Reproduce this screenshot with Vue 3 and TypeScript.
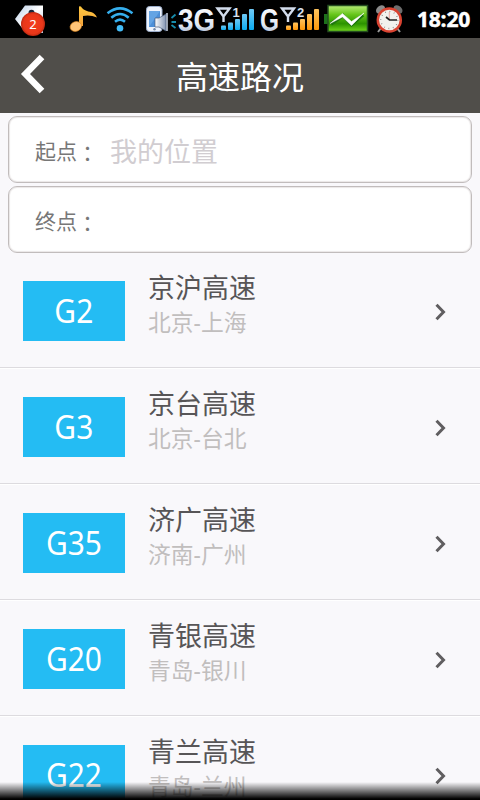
<script setup lang="ts">
interface Road {
  code: string
  name: string
  route: string
}

const roads: Road[] = [
  { code: 'G2', name: '京沪高速', route: '北京-上海' },
  { code: 'G3', name: '京台高速', route: '北京-台北' },
  { code: 'G35', name: '济广高速', route: '济南-广州' },
  { code: 'G20', name: '青银高速', route: '青岛-银川' },
  { code: 'G22', name: '青兰高速', route: '青岛-兰州' },
]
</script>

<template>
  <div class="screen">
    <div class="status">
      <svg width="60" height="38" viewBox="0 0 60 38">
        <defs>
          <linearGradient id="tag" x1="0" y1="0" x2="1" y2="1">
            <stop offset="0" stop-color="#b7cde6" /><stop offset="0.5" stop-color="#fff" /><stop offset="1" stop-color="#b5c8df" />
          </linearGradient>
          <radialGradient id="red"><stop offset="0" stop-color="#f43c1c" /><stop offset="0.8" stop-color="#e9371a" /><stop offset="1" stop-color="#bd2811" /></radialGradient>
        </defs>
        <path d="M15 19L25 5.500H43V33H26Z" fill="url(#tag)" />
        <circle cx="31.500" cy="12.800" r="3" fill="#18283c" />
        <circle cx="33" cy="24" r="12" fill="url(#red)" />
        <text x="33" y="28.800" text-anchor="middle" class="count">2</text>
      </svg>
      <svg width="42" height="38" viewBox="60 0 42 38">
        <defs>
          <linearGradient id="note" x1="0" y1="0" x2="0" y2="1"><stop offset="0" stop-color="#ffc83f" /><stop offset="1" stop-color="#f4a33c" /></linearGradient>
        </defs>
        <path d="M79 6.500Q81 5.500 82 8Q85 11 91 12Q95 13 97 17.500Q90 14.500 83 16V26H79Z" fill="url(#note)" />
        <ellipse cx="75.800" cy="26.500" rx="5.800" ry="4.800" transform="rotate(-20 75.800 26.500)" fill="#ffc477" stroke="#e58b20" stroke-width=".6" />
      </svg>
      <svg width="40" height="38" viewBox="102 0 40 38">
        <g fill="none" stroke="#35aeed" stroke-width="2.500">
          <path d="M107.500 13.200Q120 3.500 132.500 13.200" />
          <path d="M111.300 17.800Q120 10.300 128.700 17.800" />
          <path d="M115 21.800Q120 17.500 125 21.800" />
        </g>
        <circle cx="120" cy="28.300" r="3.300" fill="#43bdf8" />
      </svg>
      <svg width="36" height="38" viewBox="142 0 36 38">
        <defs>
          <linearGradient id="silver" x1="0" y1="0" x2="1" y2="0"><stop offset="0" stop-color="#fff" /><stop offset="1" stop-color="#8193b1" /></linearGradient>
        </defs>
        <rect x="146.500" y="6.500" width="15.500" height="25" rx="3" fill="#eef3fc" stroke="#9badca" />
        <rect x="149" y="11" width="11" height="16" fill="#4d8fd8" />
        <path d="M149 27L160 11H149Z" fill="#75b2ed" opacity=".6" />
        <circle cx="154.500" cy="29.300" r="1.200" fill="#7589a8" />
        <path d="M155 18H159L166 14V31L159 27H155Z" fill="url(#silver)" stroke="#485a79" stroke-width=".7" />
        <path d="M167 13V31" stroke="#ccd7e8" stroke-width="1.500" />
        <path d="M171.500 18L175.500 14.500M171.500 22H176M171.500 25L175.500 28" stroke="#168cad" stroke-width="1.800" />
      </svg>
      <svg width="80" height="38" viewBox="178 0 80 38">
        <defs>
          <linearGradient id="metal" x1="0" y1="0" x2="0" y2="1"><stop offset="0" stop-color="#fff" /><stop offset="0.65" stop-color="#e2e9f3" /><stop offset="1" stop-color="#91a5c4" /></linearGradient>
          <linearGradient id="blue" x1="0" y1="0" x2="0" y2="1"><stop offset="0" stop-color="#70c9f5" /><stop offset="1" stop-color="#0cacf1" /></linearGradient>
        </defs>
        <text x="178" y="30.500" class="network" textLength="37" lengthAdjust="spacingAndGlyphs" fill="url(#metal)">3G</text>
        <path d="M217.500 8.500H229.500L223.500 16.500ZM223.500 16V22" class="antenna" />
        <text x="232.500" y="16.500" class="sim">1</text>
        <g fill="url(#blue)">
          <rect x="221" y="25.500" width="5" height="4.500" rx="1" /><rect x="228" y="22.500" width="5" height="7.500" rx="1" /><rect x="235" y="19" width="5" height="11" rx="1" /><rect x="242" y="14" width="5" height="16" rx="1" /><rect x="249" y="9" width="5" height="21" rx="1" />
        </g>
      </svg>
      <svg width="65" height="38" viewBox="258 0 65 38">
        <defs>
          <linearGradient id="orange" x1="0" y1="0" x2="0" y2="1"><stop offset="0" stop-color="#ffc45e" /><stop offset="1" stop-color="#ff980a" /></linearGradient>
        </defs>
        <text x="260" y="30.500" class="network" textLength="19" lengthAdjust="spacingAndGlyphs" fill="url(#metal)">G</text>
        <path d="M282 8.500H294L288 16.500ZM288 16V22" class="antenna" />
        <text x="297" y="16.500" class="sim">2</text>
        <g fill="url(#orange)">
          <rect x="286" y="25.500" width="5" height="4.500" rx="1" /><rect x="293" y="22.500" width="5" height="7.500" rx="1" /><rect x="300" y="19" width="5" height="11" rx="1" /><rect x="307" y="14" width="5" height="16" rx="1" /><rect x="314" y="9" width="5" height="21" rx="1" />
        </g>
      </svg>
      <svg width="49" height="38" viewBox="323 0 49 38">
        <defs>
          <linearGradient id="green" x1="0" y1="0" x2="0" y2="1"><stop offset="0" stop-color="#b7ec76" /><stop offset="0.35" stop-color="#66c51b" /><stop offset="0.7" stop-color="#2c9300" /><stop offset="1" stop-color="#73d91c" /></linearGradient>
        </defs>
        <rect x="324" y="14" width="5" height="10" fill="#1d711b" />
        <rect x="328" y="5.500" width="39.500" height="26" fill="url(#green)" stroke="#254e20" stroke-width="1.500" />
        <path d="M331 24L343 15.500L351.500 24.500L363 15" fill="none" stroke="#1e7610" stroke-width="3.500" />
        <path d="M330 23.500L342.500 13.500L351.500 21.500L364 13L351.500 25.500L342.500 17Z" fill="#fff" stroke="#fff" stroke-width=".5" />
      </svg>
      <svg width="34" height="38" viewBox="372 0 34 38">
        <path d="M381 28L378 32M397 28L400 32" stroke="#999" stroke-width="2" />
        <ellipse cx="380.500" cy="9.500" rx="5" ry="3.700" transform="rotate(-40 380.500 9.500)" fill="#8b8b8b" />
        <ellipse cx="398" cy="9.500" rx="5" ry="3.700" transform="rotate(40 398 9.500)" fill="#6c6c6c" />
        <circle cx="389.300" cy="20" r="11.500" fill="#f2f2ee" stroke="#d94331" stroke-width="2.500" />
        <circle cx="389.300" cy="20" r="8.500" fill="none" stroke="#777" stroke-width="1.300" stroke-dasharray=".7 3.751" />
        <path d="M389.300 20V12" stroke="#ecaaa4" />
        <path d="M386 17L389.500 20H397" fill="none" stroke="#222" stroke-width="1.700" />
      </svg>
      <span class="time">18:20</span>
    </div>

    <header class="header">
      <svg class="back" width="26" height="42" viewBox="0 0 26 42"><path d="M22 4L5.500 21L22 38" fill="none" stroke="#fff" stroke-width="6.500" /></svg>
      <h1>高速路况</h1>
    </header>

    <div class="form">
      <div class="field"><span class="label">起点<span class="colon">：</span></span><span class="placeholder">我的位置</span></div>
      <div class="field"><span class="label">终点<span class="colon">：</span></span></div>
    </div>

    <div class="list">
      <div v-for="road in roads" :key="road.code" class="row">
        <div class="badge"><span class="code">{{ road.code }}</span></div>
        <div class="info">
          <div class="name">{{ road.name }}</div>
          <div class="route">{{ road.route }}</div>
        </div>
        <svg class="chevron" width="12" height="20" viewBox="0 0 12 20"><path d="M2.500 2.800L9.500 10L2.500 17.200" fill="none" stroke="#605e60" stroke-width="3" /></svg>
      </div>
    </div>
    <div class="fade"></div>
  </div>
</template>

<style>
body {
  overflow: hidden;
}
</style>

<style scoped>
.screen {
  position: relative;
  width: 480px;
  height: 800px;
  overflow: hidden;
  background: #f9f8fb;
  font-family: "Noto Sans", "Noto Sans CJK SC", sans-serif;
}
.status {
  display: flex;
  height: 38px;
  background: #000;
}
.status svg {
  flex: none;
}
.count {
  font-size: 13px;
  fill: #fff;
}
.network {
  font: bold 32px "Liberation Sans", sans-serif;
}
.antenna {
  fill: none;
  stroke: #d2dcec;
  stroke-width: 2.4px;
}
.sim {
  font: bold 13px "Liberation Sans", sans-serif;
  fill: #d9e2ef;
}
.time {
  margin-left: 11px;
  font-family: "Open Sans", sans-serif;
  font-size: 21px;
  font-weight: 700;
  line-height: 39px;
  letter-spacing: -0.2px;
  color: #fff;
  -webkit-text-stroke: 0.5px #fff;
}
.header {
  display: flex;
  align-items: center;
  height: 75px;
  box-sizing: border-box;
  padding-left: 20px;
  background: #504e4a;
}
.back {
  flex: none;
  margin-bottom: 3px;
}
.header h1 {
  flex: 1;
  margin: 0;
  padding: 3px 46px 0 0;
  text-align: center;
  font-size: 32px;
  font-weight: 400;
  line-height: 40px;
  color: #fff;
}
.form {
  display: flex;
  flex-direction: column;
  gap: 3px;
  height: 139px;
  box-sizing: border-box;
  padding: 3px 8px 0;
}
.field {
  display: flex;
  flex: none;
  align-items: center;
  height: 67px;
  box-sizing: border-box;
  padding-left: 26px;
  border: 1px solid #c1bcbc;
  border-radius: 9px;
  background: #fff;
  box-shadow: inset 0 0 1px 1px #eae7e7;
}
.label {
  width: 75px;
  padding-top: 1px;
  font-size: 21px;
  line-height: 28px;
  color: #777;
}
.colon {
  display: inline-block;
  font-family: "Noto Sans CJK TC", sans-serif;
  transform: translateY(2px);
}
.placeholder {
  padding-top: 4px;
  font-size: 27px;
  line-height: 36px;
  color: #d1cdd1;
}
.row {
  display: flex;
  height: 116px;
  box-sizing: border-box;
  padding: 0 34px 0 23px;
  border-bottom: 1px solid #dddbdf;
  box-shadow: 0 1px #fff;
}
.badge {
  width: 102px;
  height: 60px;
  margin-top: 29px;
  background: #24bcf3;
  color: #fff;
  font-size: 32px;
  line-height: 60px;
  text-align: center;
}
.code {
  display: inline-block;
  transform: scaleX(0.935);
}
.info {
  flex: 1;
  padding: 18px 0 0 23px;
}
.name {
  font-size: 27px;
  line-height: 36px;
  color: #575557;
}
.route {
  font-size: 22.8px;
  line-height: 33px;
  color: #c1bebe;
}
.chevron {
  margin-top: 50px;
}
.fade {
  position: absolute;
  left: 0;
  right: 0;
  bottom: 0;
  height: 18px;
  background: linear-gradient(transparent, #000 94%);
}
</style>
